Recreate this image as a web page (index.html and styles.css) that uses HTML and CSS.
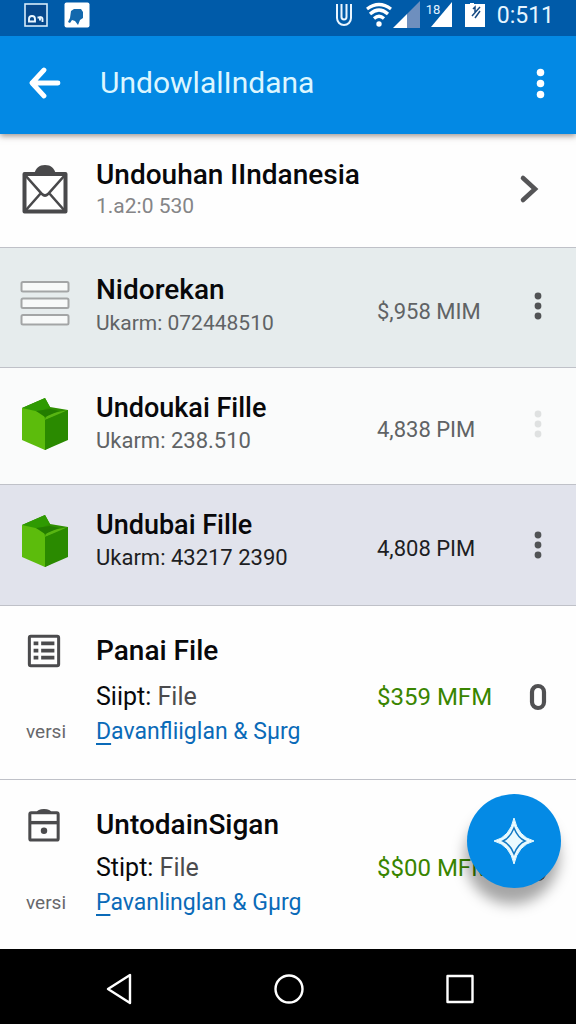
FILE: index.html
```html
<!DOCTYPE html>
<html lang="id">
<head>
<meta charset="utf-8">
<meta name="viewport" content="width=device-width, initial-scale=1">
<title>UndowlalIndana</title>
<link rel="stylesheet" href="styles.css">
</head>
<body>
<svg class="defs" aria-hidden="true">
  <symbol id="dots" viewBox="0 0 8 28"><circle cx="4" cy="4" r="3.4"/><circle cx="4" cy="14" r="3.4"/><circle cx="4" cy="24" r="3.4"/></symbol>
  <symbol id="box" viewBox="0 0 48 54">
    <path fill="#2f8f00" d="M1 11 24 1l5 9 18 3-1 28-22 12z"/>
    <path fill="#2f9a02" d="M1 11 24 1l5 9-14 6z"/>
    <path fill="#5cbc0c" d="M1 11l18 4q5 2 5 8v30L1 43z"/>
    <path fill="#58b512" d="M24 22q2-5 8-6l15-3-7 4-16 6z"/>
    <path fill="#237d00" d="M15 14l14-2 9 2-14 6z"/>
    <path fill="#2a8a00" d="M24 23l23-10v30L24 53z"/>
  </symbol>
  <symbol id="pill" viewBox="0 0 18 28"><rect x="3" y="3" width="12" height="22" rx="6" fill="none" stroke="#505052" stroke-width="4.2"/></symbol>
</svg>

<header>
  <div class="status">
    <svg width="24" height="24" viewBox="0 0 24 24"><rect x="1" y="1" width="22" height="22" fill="#06488c" stroke="#d5ebfa" stroke-width="1.6"/><path d="M5 18.500h6V16q0-3-3-3t-3 3v2.500zM13.500 14.500h2.500v3M15.500 14q3 0 3 2v3" fill="none" stroke="#e9f6ff" stroke-width="1.900"/></svg>
    <svg class="chat" width="26" height="26" viewBox="0 0 26 26"><rect x=".5" y=".5" width="25" height="25" rx="2" fill="#fff"/><path d="M7 9l3-2h7l2 3v6l-3 2-2 5-3-4-3-1-2 3-2-1 2-4z" fill="#1268ad"/></svg>
    <span class="fill"></span>
    <svg width="18" height="26" viewBox="0 0 18 26"><path d="M2 2v14a7 7 0 0 0 14 0V2M6.500 2v13a2.500 2.500 0 0 0 5 0V2" fill="none" stroke="#e9f5ff" stroke-width="2"/></svg>
    <svg class="wifi" width="28" height="26" viewBox="0 0 28 26" fill="none" stroke="#fff"><path d="M2 7Q14-2 26 7M5 12Q14 4 23 12M9 16.500Q14 12 19 16.500" stroke-width="3.200"/><circle cx="14" cy="22" r="2.700" fill="#fff" stroke="none"/></svg>
    <svg width="28" height="28" viewBox="0 0 28 28"><path d="M27 0v27H14V13z" fill="#6e8fbe"/><path d="M0 27 14 13v14z" fill="#fff"/></svg>
    <span class="cell"><svg width="22" height="26" viewBox="0 0 22 26"><path d="M21 0v25H0z" fill="#fff"/></svg><span class="cell-label">18</span></span>
    <svg class="battery" width="20" height="24" viewBox="0 0 20 24"><path d="M0 1h5V0h4v1h11v23H0z" fill="#fff"/><path d="M8 6l2-2v5M15 4 7 13M15 8l-5 7" fill="none" stroke="#174b83" stroke-width="1.500"/></svg>
    <time class="clock">0:511</time>
  </div>
  <div class="appbar">
    <button class="plain" aria-label="Kembali"><svg width="32" height="32" viewBox="0 0 32 32" fill="none" stroke="#fff" stroke-width="4.800" stroke-linecap="round" stroke-linejoin="round"><path d="M15 3 3 16l12 13M3 16h26"/></svg></button>
    <h1>UndowlalIndana</h1>
    <button class="plain more" aria-label="Menu"><svg width="9" height="31" fill="#fff"><use href="#dots"/></svg></button>
  </div>
</header>

<main>
  <section class="row folder">
    <svg class="icon" width="46" height="50" viewBox="0 0 46 50"><path d="M12 10C14 4 17 1 23 1s9 3 11 9z" fill="#49494b"/><path d="M2.500 10h41v37.500h-41z" fill="#fff" stroke="#49494b" stroke-width="4" stroke-linejoin="round"/><path d="M3 11 20 30q3 3 6 0L43 11M4 46 19 29M42 46 27 29" fill="none" stroke="#49494b" stroke-width="2.600"/></svg>
    <div class="text"><h2>Undouhan IIndanesia</h2><p>1.a2:0 530</p></div>
    <button class="plain go" aria-label="Buka"><svg width="20" height="30" viewBox="0 0 20 30" fill="none" stroke="#555557" stroke-width="4.600" stroke-linecap="round"><path d="M4 4 16 15 4 26"/></svg></button>
  </section>

  <section class="row mist">
    <svg class="icon" width="50" height="46" viewBox="0 0 50 46" fill="#f7f9f9" stroke="#a3a5a6" stroke-width="2"><rect x="1.500" y="2" width="47" height="9.500" rx="1.500"/><rect x="1.500" y="18.500" width="47" height="9.500" rx="1.500"/><rect x="1.500" y="35" width="47" height="9.500" rx="1.500"/></svg>
    <div class="text"><h2>Nidorekan</h2><p>Ukarm: 072448510</p></div>
    <span class="size">$,958 MIM</span>
    <button class="plain menu" aria-label="Opsi"><svg width="8" height="28"><use href="#dots"/></svg></button>
  </section>

  <section class="row pale">
    <svg class="icon" width="48" height="54"><use href="#box"/></svg>
    <div class="text"><h2>Undoukai Fille</h2><p>Ukarm: 238.510</p></div>
    <span class="size">4,838 PIM</span>
    <button class="plain menu faint" aria-label="Opsi"><svg width="8" height="28"><use href="#dots"/></svg></button>
  </section>

  <section class="row lilac">
    <svg class="icon" width="48" height="54"><use href="#box"/></svg>
    <div class="text"><h2>Undubai Fille</h2><p>Ukarm: 43217 2390</p></div>
    <span class="size">4,808 PIM</span>
    <button class="plain menu" aria-label="Opsi"><svg width="8" height="28"><use href="#dots"/></svg></button>
  </section>

  <section class="detail">
    <svg class="icon" width="36" height="36" viewBox="0 0 36 36"><rect x="2.500" y="2.500" width="31" height="31" rx="1.500" fill="none" stroke="#4b4b4d" stroke-width="3.200"/><path d="M7 8h5v4H7zM15 8h14v4H15zM7 15.500h5v4H7zM15 15.500h14v4H15zM7 23h5v4H7zM15 23h14v4H15z" fill="#4b4b4d"/></svg>
    <h2>Panai File</h2>
    <p class="type">Siipt: <span>File</span></p>
    <span class="price">$359 MFM</span>
    <button class="plain clip" aria-label="Lampiran"><svg width="18" height="28"><use href="#pill"/></svg></button>
    <span class="versi">versi</span>
    <a class="link" href="#"><span>D</span>avanfliiglan &amp; Sµrg</a>
  </section>

  <section class="detail last">
    <svg class="icon" width="36" height="36" viewBox="0 0 36 36"><path d="M10 5q1-4 8-4t8 4z" fill="#4b4b4d"/><rect x="3" y="5" width="30" height="29" rx="1.500" fill="none" stroke="#4b4b4d" stroke-width="3.200"/><path d="M3 15.500h30" stroke="#4b4b4d" stroke-width="3.600"/><circle cx="18" cy="24" r="3.400" fill="#4b4b4d"/></svg>
    <h2>UntodainSigan</h2>
    <p class="type">Stipt: <span>File</span></p>
    <span class="price">$$00 MFM</span>
    <button class="plain clip" aria-label="Lampiran"><svg width="18" height="28"><use href="#pill"/></svg></button>
    <span class="versi">versi</span>
    <a class="link" href="#"><span>P</span>avanlinglan &amp; Gµrg</a>
  </section>

  <button class="fab" aria-label="Tambah"><svg width="42" height="48" viewBox="0 0 42 48"><path d="M21 1Q25 20 41 24 25 28 21 47 17 28 1 24 17 20 21 1z" fill="#e8faff" stroke="#e8faff"/><path d="M21 11Q25 21 32 24 25 27 21 37 17 27 10 24 17 21 21 11z" fill="#eafaff" stroke="#1279c4" stroke-width="1.500"/></svg></button>
</main>

<nav>
  <button class="plain" aria-label="Kembali"><svg width="26" height="32" viewBox="0 0 26 32"><path d="M24 2v28L2 16z"/></svg></button>
  <button class="plain" aria-label="Beranda"><svg width="32" height="32" viewBox="0 0 32 32"><circle cx="16" cy="16" r="13.500"/></svg></button>
  <button class="plain" aria-label="Terkini"><svg width="28" height="32" viewBox="0 0 28 32"><rect x="1.500" y="3" width="25" height="26"/></svg></button>
</nav>
</body>
</html>
```
FILE: styles.css
```css
* { box-sizing: border-box; }
body {
  margin: 0;
  min-height: 100vh;
  display: flex;
  flex-direction: column;
  font-family: Roboto, "Liberation Sans", sans-serif;
  color: #08080a;
  background: #fff;
}
h1, h2, p { margin: 0; }
svg { display: block; }
.defs { position: absolute; width: 0; height: 0; }
.plain {
  display: flex;
  align-items: center;
  justify-content: center;
  padding: 0;
  border: 0;
  background: none;
  cursor: pointer;
}

.status {
  display: flex;
  align-items: center;
  height: 36px;
  padding: 0 22px 6px 24px;
  background: #005ba9;
}
.chat { margin-left: 16px; }
.fill { flex: 1; }
.wifi { margin-left: 12px; }
.cell { position: relative; margin-left: 10px; }
.cell-label {
  position: absolute;
  top: 0;
  left: -5px;
  font-size: 13px;
  line-height: 16px;
  color: #e2f2ff;
}
.battery { margin-left: 12px; }
.clock {
  margin-left: 12px;
  font-size: 23px;
  line-height: 30px;
  padding-top: 2px;
  color: #e6f5ff;
}

header { position: relative; z-index: 1; box-shadow: 0 2px 6px rgba(60, 40, 30, 0.5); }
.appbar {
  display: flex;
  align-items: center;
  height: 98px;
  padding: 0 31px 4px 29px;
  background: #0389e4;
}
h1 {
  flex: 1;
  padding-left: 39px;
  font-size: 30px;
  line-height: 36px;
  font-weight: 400;
  color: #dcf6ff;
}

main { position: relative; flex: 1; background: #fefefe; }
.row, .detail {
  display: grid;
  grid-template-columns: 96px 1fr 123px 76px;
  align-items: center;
  border-bottom: 1px solid #bfc1c8;
}
.icon { justify-self: center; }
.row .icon { margin-right: 6px; }
h2 {
  font-size: 28px;
  line-height: 34px;
  font-weight: 500;
}
.text p, .size {
  font-size: 22px;
  line-height: 32px;
  color: #606365;
}
.folder { padding: 24px 0 27px; }
.folder .text { grid-column: 2 / 4; }
.folder p { line-height: 28px; color: #858587; }
.folder .text p, .mist .text p { font-size: 21px; }
.folder .text p { line-height: 28px; color: #858587; }
.go { padding-right: 18px; }
.mist { padding: 25px 0 28px; background: #e6eced; }
.mist .icon { margin-bottom: 6px; }
.pale { padding: 23px 0 27px; background: #fafbfb; }
.lilac { padding: 23px 0 31px; background: #e1e3ec; }
.pale h2, .lilac h2 { font-size: 27px; }
.lilac .text p, .lilac .size { color: #1d1e23; }
.size { padding-top: 12px; }
.lilac .size { padding-top: 16px; }
.menu { fill: #515355; }
.lilac .menu { padding-top: 8px; }
.faint { fill: #dfe1e1; }

.detail { padding: 28px 0 30px; }
.detail .icon { margin-right: 8px; }
.detail h2 { grid-column: 2 / 5; }
.type, .price, .clip { margin-top: 11px; }
.type, .price { line-height: 36px; }
.type { grid-column: 2; font-size: 25px; }
.price { font-size: 24px; color: #398500; }
.type span { color: #4b4b4d; }
.versi {
  grid-column: 1;
  padding-left: 26px;
  font-size: 19px;
  line-height: 34px;
  color: #67676a;
}
.link {
  grid-column: 2 / 5;
  font-size: 23px;
  line-height: 34px;
  color: #0a6ab8;
  text-decoration: none;
}
.link span { text-decoration: underline; text-underline-offset: 4px; }
.detail .icon, .detail h2 { height: 34px; }
.detail .icon { overflow: visible; }
.last { padding-bottom: 29px; border-bottom: 0; }
.last .type, .last .price, .last .clip { margin-top: 8px; }

.fab {
  position: absolute;
  right: 15px;
  bottom: 61px;
  display: flex;
  align-items: center;
  justify-content: center;
  width: 94px;
  height: 94px;
  padding: 0;
  border: 0;
  border-radius: 50%;
  background: #048ae5;
  box-shadow: -2px 16px 14px rgba(0, 0, 0, 0.35);
  cursor: pointer;
}

nav {
  display: flex;
  justify-content: space-between;
  align-items: center;
  height: 75px;
  padding: 4px 102px 0 106px;
  background: #000;
}
nav svg { fill: none; stroke: #fff; stroke-width: 2.4; stroke-linejoin: round; }
```
